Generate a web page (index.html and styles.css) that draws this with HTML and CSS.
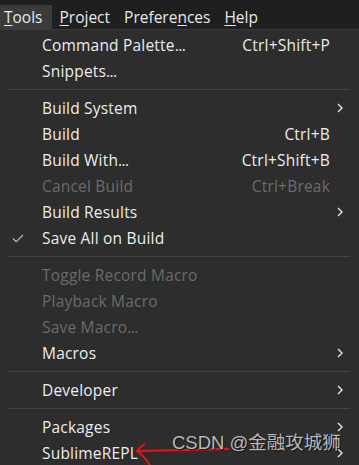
FILE: index.html
```html
<!DOCTYPE html>
<html>
<head>
<meta charset="utf-8">
<link rel="stylesheet" href="styles.css">
</head>
<body>
<div class="menubar">
  <span class="top active"><u>T</u>ools</span>
  <span class="top"><u>P</u>roject</span>
  <span class="top">Prefere<u>n</u>ces</span>
  <span class="top"><u>H</u>elp</span>
</div>
<div class="menu">
  <div class="row"><span class="chk"></span><span class="label">Command Palette<span class="dots">...</span></span><span class="key">Ctrl+Shift+P</span><span class="arr"></span></div>
  <div class="row"><span class="chk"></span><span class="label">Snippets<span class="dots">...</span></span><span class="key"></span><span class="arr"></span></div>
  <div class="sep"></div>
  <div class="row"><span class="chk"></span><span class="label">Build System</span><span class="key"></span><span class="arr"><svg width="6" height="10" viewBox="0 0 6 10"><path d="M1 1 L5 5 L1 9" fill="none" stroke="#e6e6e6" stroke-width="1.4"/></svg></span></div>
  <div class="row"><span class="chk"></span><span class="label">Build</span><span class="key">Ctrl+B</span><span class="arr"></span></div>
  <div class="row"><span class="chk"></span><span class="label">Build With<span class="dots">...</span></span><span class="key">Ctrl+Shift+B</span><span class="arr"></span></div>
  <div class="row dis"><span class="chk"></span><span class="label">Cancel Build</span><span class="key">Ctrl+Break</span><span class="arr"></span></div>
  <div class="row"><span class="chk"></span><span class="label">Build Results</span><span class="key"></span><span class="arr"><svg width="6" height="10" viewBox="0 0 6 10"><path d="M1 1 L5 5 L1 9" fill="none" stroke="#e6e6e6" stroke-width="1.4"/></svg></span></div>
  <div class="row"><span class="chk"><svg width="12" height="9" viewBox="0 0 12 9"><path d="M1 4.5 L4.2 7.7 L11 1" fill="none" stroke="#bdbdbd" stroke-width="1.1"/></svg></span><span class="label">Save All on Build</span><span class="key"></span><span class="arr"></span></div>
  <div class="sep"></div>
  <div class="row dis"><span class="chk"></span><span class="label">Toggle Record Macro</span><span class="key"></span><span class="arr"></span></div>
  <div class="row dis"><span class="chk"></span><span class="label">Playback Macro</span><span class="key"></span><span class="arr"></span></div>
  <div class="row dis"><span class="chk"></span><span class="label">Save Macro<span class="dots">...</span></span><span class="key"></span><span class="arr"></span></div>
  <div class="row"><span class="chk"></span><span class="label">Macros</span><span class="key"></span><span class="arr"><svg width="6" height="10" viewBox="0 0 6 10"><path d="M1 1 L5 5 L1 9" fill="none" stroke="#e6e6e6" stroke-width="1.4"/></svg></span></div>
  <div class="sep"></div>
  <div class="row"><span class="chk"></span><span class="label">Developer</span><span class="key"></span><span class="arr"><svg width="6" height="10" viewBox="0 0 6 10"><path d="M1 1 L5 5 L1 9" fill="none" stroke="#e6e6e6" stroke-width="1.4"/></svg></span></div>
  <div class="sep"></div>
  <div class="row"><span class="chk"></span><span class="label">Packages</span><span class="key"></span><span class="arr"><svg width="6" height="10" viewBox="0 0 6 10"><path d="M1 1 L5 5 L1 9" fill="none" stroke="#e6e6e6" stroke-width="1.4"/></svg></span></div>
  <div class="row"><span class="chk"></span><span class="label">SublimeREPL</span><span class="key"></span><span class="arr"><svg width="6" height="10" viewBox="0 0 6 10"><path d="M1 1 L5 5 L1 9" fill="none" stroke="#e6e6e6" stroke-width="1.4"/></svg></span></div>
</div>
<svg class="annot" width="120" height="30" viewBox="0 0 120 30">
  <path d="M3 14 Q40 13 95 12" fill="none" stroke="#e8141c" stroke-width="2"/>
  <path d="M11 7 Q6 10 3 14 Q9 18 16 28" fill="none" stroke="#e8141c" stroke-width="2"/>
</svg>
<div class="watermark">CSDN @金融攻城狮</div>
</body>
</html>
```
FILE: styles.css
```css
html, body {
  margin: 0;
  padding: 0;
  background: #2d2d2d;
  width: 359px;
  height: 465px;
  overflow: hidden;
  position: relative;
  font-family: "Open Sans", "Noto Sans", sans-serif;
}
.menubar {
  height: 29px;
  background: #1f1f1f;
  border-bottom: 1px solid #3a3a3a;
  display: flex;
  align-items: flex-end;
  gap: 6px;
  color: #e8e8e8;
  font-size: 15.5px;
}
.top {
  height: 24px;
  line-height: 24px;
  padding: 0 4px;
}
.top.active {
  background: #3b3b3b;
  padding-right: 9px;
  margin-right: -2px;
}
.top u { text-decoration-thickness: 1px; text-underline-offset: 2px; }
.menu {
  padding-top: 2px;
  color: #ececec;
  font-size: 15.5px;
}
.label { letter-spacing: 0.2px; }
.dots { letter-spacing: -0.6px; }
.row {
  display: grid;
  grid-template-columns: 42px 1fr auto 29px;
  height: 26px;
  align-items: center;
}
.row.dis { color: #6b6b6b; }
.key { text-align: right; letter-spacing: 0.2px; }
.chk { display: flex; justify-content: center; }
.chk svg { display: block; margin-left: -6px; }
.arr { display: flex; padding-left: 7px; }
.arr svg { display: block; }
.sep {
  height: 11px;
  display: flex;
  align-items: center;
  padding: 0 9px 0 8px;
}
.sep::before {
  content: "";
  flex: 1;
  height: 1px;
  background: #444444;
}
.annot {
  position: absolute;
  left: 134px;
  top: 437px;
}
.watermark {
  position: absolute;
  left: 172px;
  top: 428px;
  font-family: "Liberation Sans", "Noto Sans CJK SC", sans-serif;
  font-size: 18.5px;
  color: #b8b8b8;
  text-shadow: 1px 1px 1px #111;
}
```
